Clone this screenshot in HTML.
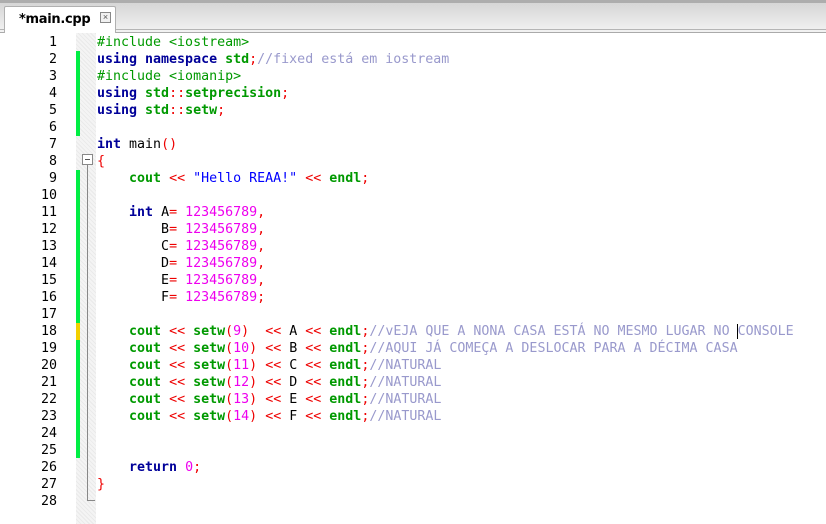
<!DOCTYPE html>
<html><head><meta charset="utf-8"><style>
body{margin:0;width:826px;height:524px;overflow:hidden;background:#fff;position:relative;font-family:"DejaVu Sans Mono","Liberation Mono",monospace}
.top{position:absolute;left:0;top:0;width:826px;height:33px;background:linear-gradient(#d3d3d3,#f3f3f3)}
.top:before{content:"";position:absolute;left:0;top:0;width:826px;height:3px;background:#adadad}
.l1{position:absolute;left:0;top:29px;width:826px;height:1px;background:#b5b5b5}
.l2{position:absolute;left:0;top:32px;width:826px;height:1px;background:#aaa}
.tab{position:absolute;left:4px;top:6px;width:112px;height:27px;background:#fff;border:1px solid #b0b0b0;border-bottom:none;box-sizing:border-box;border-radius:2px 2px 0 0}
.tab span{position:absolute;left:14px;top:5px;font:bold 13px "DejaVu Sans","Liberation Sans",sans-serif;color:#000;letter-spacing:-0.3px}
.x{position:absolute;left:95px;top:5px;width:9px;height:9px;border:1px solid #888;font:9px/9px sans-serif;color:#555;text-align:center;background:#f0f0f0}
.gut{position:absolute;left:76px;top:33px;width:20px;height:491px;background-color:#f4f4f4;background-image:repeating-linear-gradient(45deg,#eaeaea 0 1px,transparent 1px 3px)}
.ln{position:absolute;left:0;width:57px;text-align:right;font-size:13.3px;line-height:17px;color:#000}
.code{position:absolute;left:97px;font-size:13.3px;line-height:17px;white-space:pre;color:#000}
.g{color:#009900}.b{color:#000099;font-weight:bold}.gb{color:#009900;font-weight:bold}.r{color:#ee0000}.m{color:#ee00ee}.c{color:#9999cc}.s{color:#0000ff}
.bar{position:absolute;left:76px;width:4px}
</style></head><body>
<div class="top"></div><div class="l1"></div><div class="l2"></div>
<div class="tab"><span>*main.cpp</span><div class="x">×</div></div>
<div class="gut"></div>
<div class="bar" style="top:51px;height:85px;background:#00ee44"></div>
<div class="bar" style="top:170px;height:153px;background:#00ee44"></div>
<div class="bar" style="top:323px;height:17px;background:#f2d000"></div>
<div class="bar" style="top:340px;height:118px;background:#00ee44"></div>
<div style="position:absolute;left:82px;top:154px;width:9px;height:9px;border:1px solid #888;background:#fff"><div style="position:absolute;left:2px;top:4px;width:5px;height:1px;background:#555"></div></div>
<div style="position:absolute;left:87px;top:165px;width:1px;height:336px;background:#888"></div>
<div style="position:absolute;left:87px;top:500px;width:8px;height:1px;background:#888"></div>
<div class="ln" style="top:34px">1<br>2<br>3<br>4<br>5<br>6<br>7<br>8<br>9<br>10<br>11<br>12<br>13<br>14<br>15<br>16<br>17<br>18<br>19<br>20<br>21<br>22<br>23<br>24<br>25<br>26<br>27<br>28</div>
<div class="code" style="top:34px"><span class="g">#include &lt;iostream&gt;</span>
<span class="b">using namespace</span> <span class="gb">std</span><span class="r">;</span><span class="c">//fixed está em iostream</span>
<span class="g">#include &lt;iomanip&gt;</span>
<span class="b">using</span> <span class="gb">std</span><span class="r">::</span><span class="gb">setprecision</span><span class="r">;</span>
<span class="b">using</span> <span class="gb">std</span><span class="r">::</span><span class="gb">setw</span><span class="r">;</span>

<span class="b">int</span> main<span class="r">()</span>
<span class="r">{</span>
    <span class="gb">cout</span> <span class="r">&lt;&lt;</span> <span class="s">"Hello REAA!"</span> <span class="r">&lt;&lt;</span> <span class="gb">endl</span><span class="r">;</span>

    <span class="b">int</span> A<span class="r">=</span> <span class="m">123456789</span><span class="r">,</span>
        B<span class="r">=</span> <span class="m">123456789</span><span class="r">,</span>
        C<span class="r">=</span> <span class="m">123456789</span><span class="r">,</span>
        D<span class="r">=</span> <span class="m">123456789</span><span class="r">,</span>
        E<span class="r">=</span> <span class="m">123456789</span><span class="r">,</span>
        F<span class="r">=</span> <span class="m">123456789</span><span class="r">;</span>

    <span class="gb">cout</span> <span class="r">&lt;&lt;</span> <span class="gb">setw</span><span class="r">(</span><span class="m">9</span><span class="r">)</span>  <span class="r">&lt;&lt;</span> A <span class="r">&lt;&lt;</span> <span class="gb">endl</span><span class="r">;</span><span class="c">//vEJA QUE A NONA CASA ESTÁ NO MESMO LUGAR NO </span><span style="border-left:1px solid #000;margin-left:-1px"></span><span class="c">CONSOLE</span>
    <span class="gb">cout</span> <span class="r">&lt;&lt;</span> <span class="gb">setw</span><span class="r">(</span><span class="m">10</span><span class="r">)</span> <span class="r">&lt;&lt;</span> B <span class="r">&lt;&lt;</span> <span class="gb">endl</span><span class="r">;</span><span class="c">//AQUI JÁ COMEÇA A DESLOCAR PARA A DÉCIMA CASA</span>
    <span class="gb">cout</span> <span class="r">&lt;&lt;</span> <span class="gb">setw</span><span class="r">(</span><span class="m">11</span><span class="r">)</span> <span class="r">&lt;&lt;</span> C <span class="r">&lt;&lt;</span> <span class="gb">endl</span><span class="r">;</span><span class="c">//NATURAL</span>
    <span class="gb">cout</span> <span class="r">&lt;&lt;</span> <span class="gb">setw</span><span class="r">(</span><span class="m">12</span><span class="r">)</span> <span class="r">&lt;&lt;</span> D <span class="r">&lt;&lt;</span> <span class="gb">endl</span><span class="r">;</span><span class="c">//NATURAL</span>
    <span class="gb">cout</span> <span class="r">&lt;&lt;</span> <span class="gb">setw</span><span class="r">(</span><span class="m">13</span><span class="r">)</span> <span class="r">&lt;&lt;</span> E <span class="r">&lt;&lt;</span> <span class="gb">endl</span><span class="r">;</span><span class="c">//NATURAL</span>
    <span class="gb">cout</span> <span class="r">&lt;&lt;</span> <span class="gb">setw</span><span class="r">(</span><span class="m">14</span><span class="r">)</span> <span class="r">&lt;&lt;</span> F <span class="r">&lt;&lt;</span> <span class="gb">endl</span><span class="r">;</span><span class="c">//NATURAL</span>


    <span class="b">return</span> <span class="m">0</span><span class="r">;</span>
<span class="r">}</span>
</div>
</body></html>
